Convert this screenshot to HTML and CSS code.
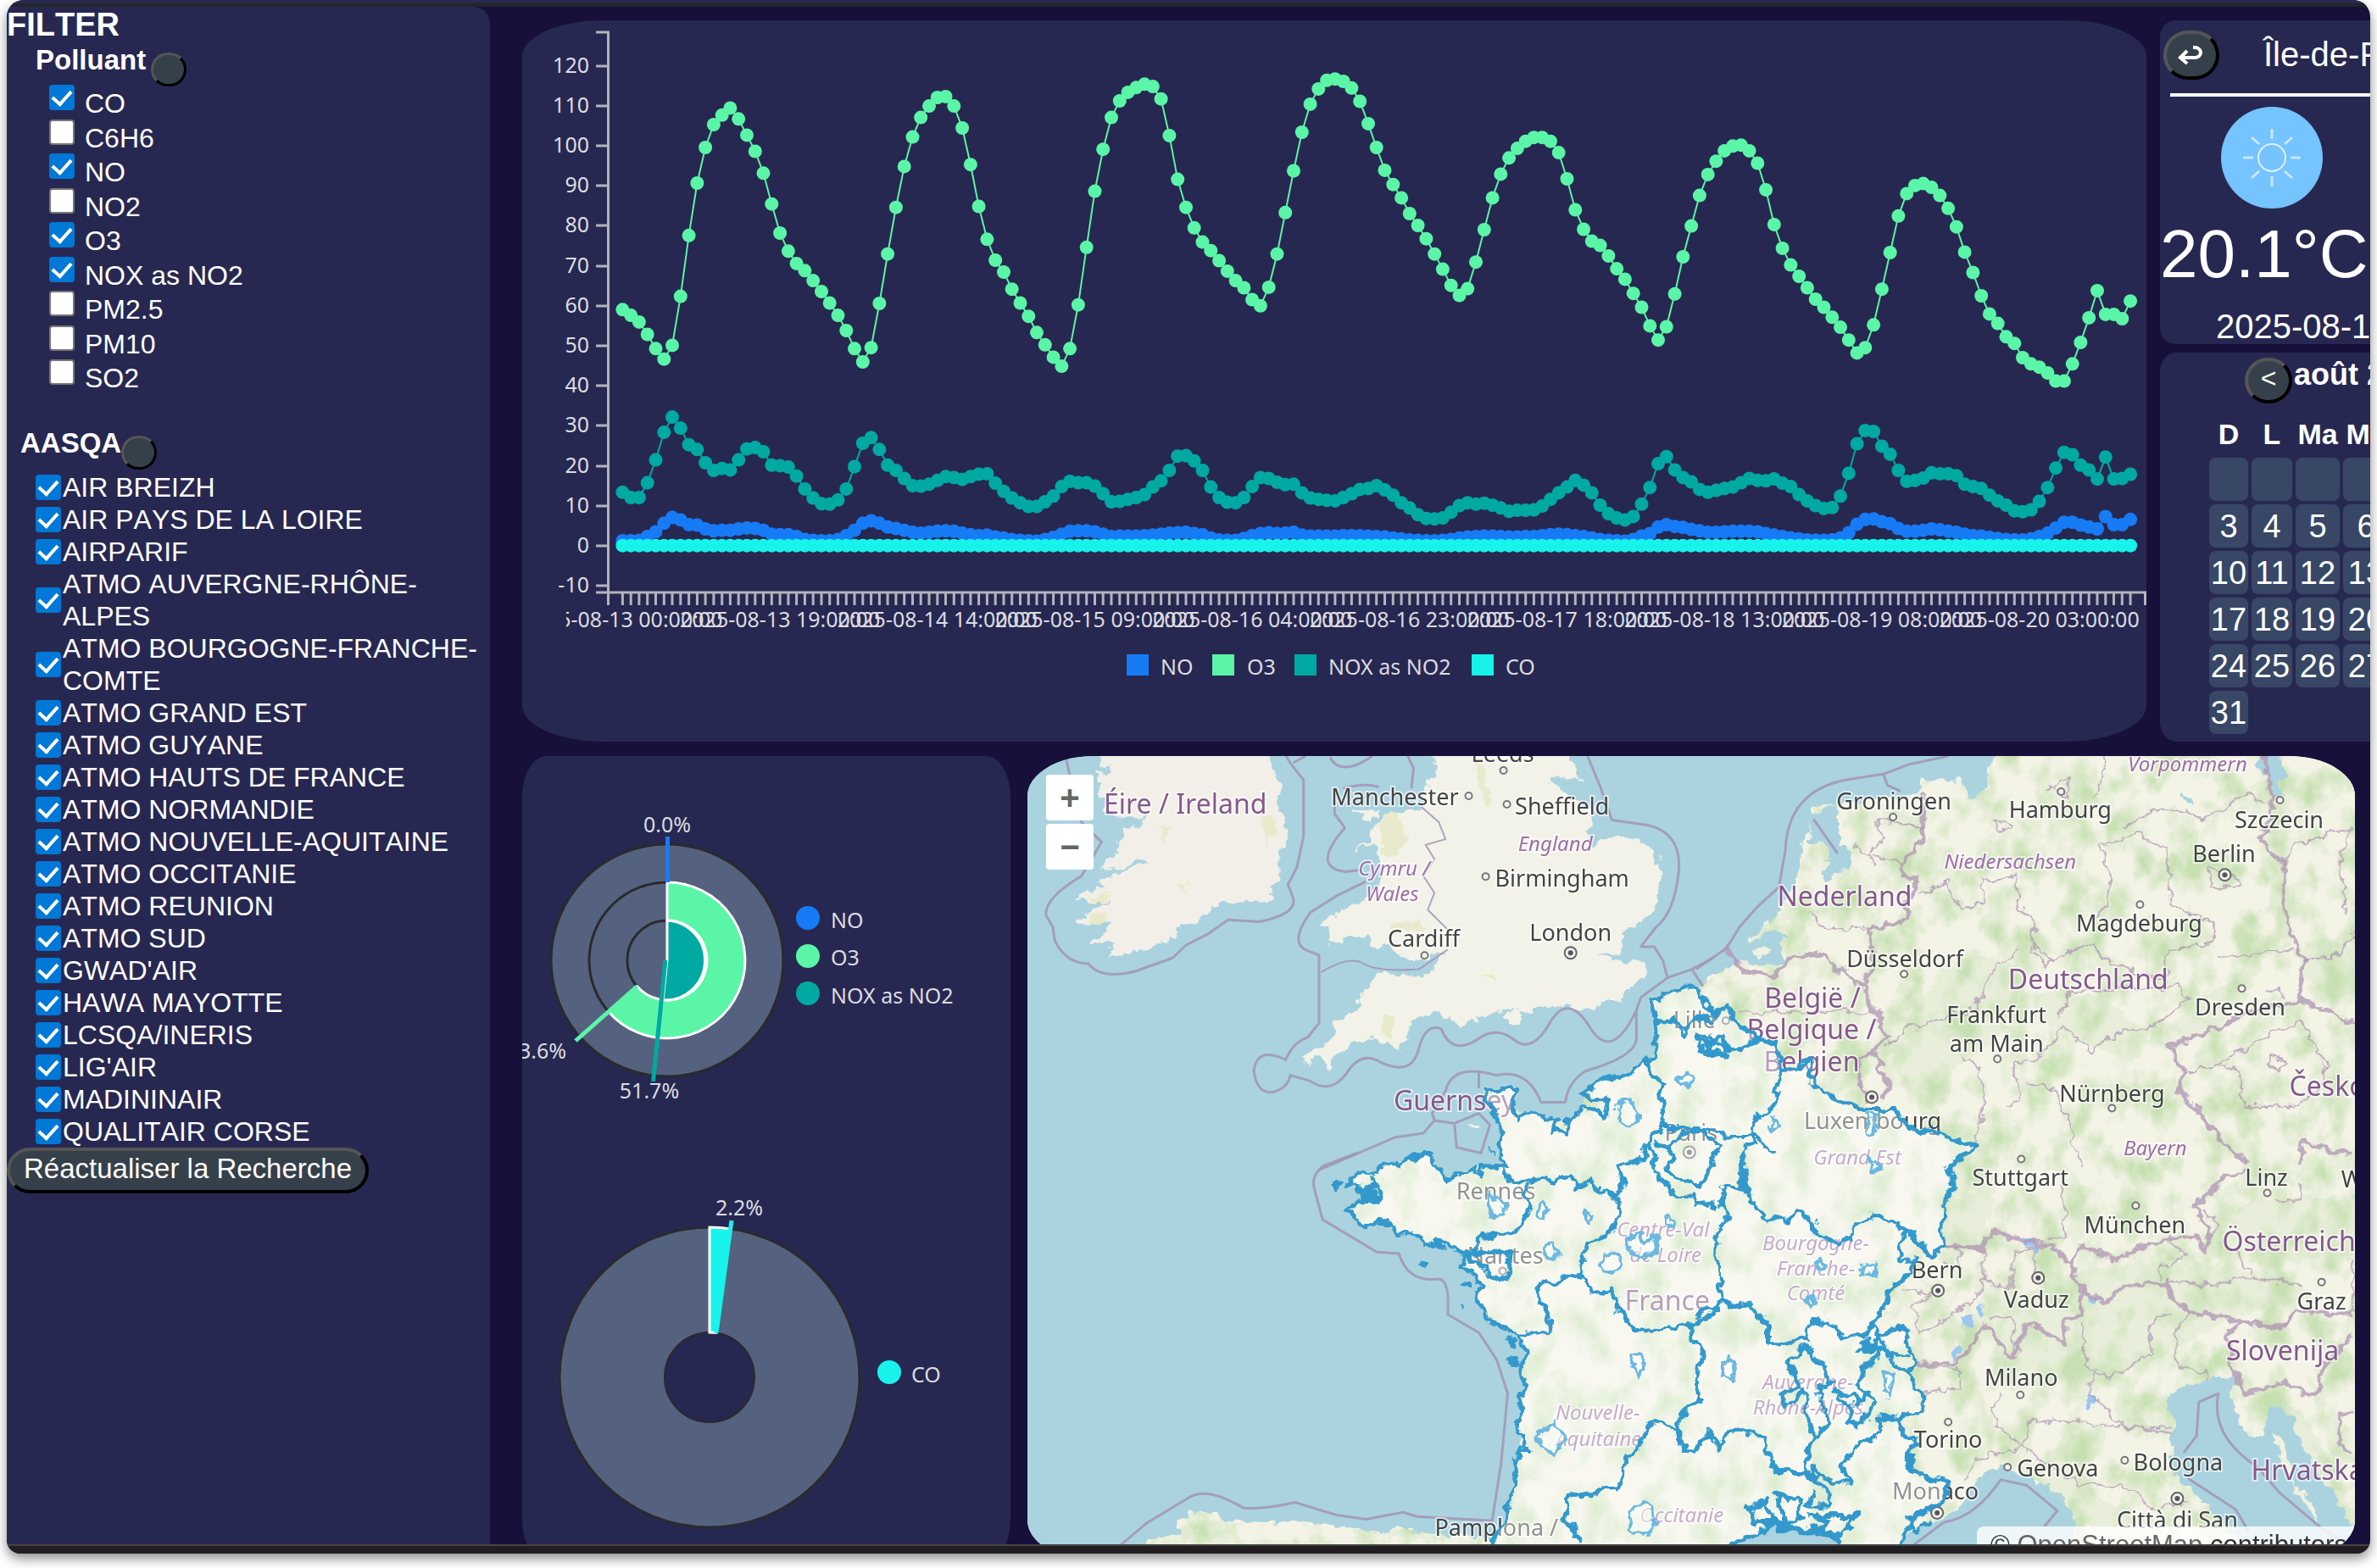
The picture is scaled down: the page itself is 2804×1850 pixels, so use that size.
FILE: index.html
```html
<!DOCTYPE html>
<html lang="fr">
<head>
<meta charset="utf-8">
<title>Qualité de l'air</title>
<link rel="stylesheet" href="styles.css">
</head>
<body>
<div class="window">
<div class="topbar"></div>
<div class="app">
<aside class="filter">
  <h1>FILTER</h1>
  <div class="group-head pollutant-head"><h2>Polluant</h2><button type="button" class="pill mini" aria-label="Tout cocher les polluants"></button></div>
  <div class="pollutants">
    <label><input type="checkbox" checked><span>CO</span></label>
    <label><input type="checkbox"><span>C6H6</span></label>
    <label><input type="checkbox" checked><span>NO</span></label>
    <label><input type="checkbox"><span>NO2</span></label>
    <label><input type="checkbox" checked><span>O3</span></label>
    <label><input type="checkbox" checked><span>NOX as NO2</span></label>
    <label><input type="checkbox"><span>PM2.5</span></label>
    <label><input type="checkbox"><span>PM10</span></label>
    <label><input type="checkbox"><span>SO2</span></label>
  </div>
  <div class="group-head aasqa-head"><h2>AASQA</h2><button type="button" class="pill mini" aria-label="Tout cocher les AASQA"></button></div>
  <div class="aasqa">
    <label><input type="checkbox" checked><span>AIR BREIZH</span></label>
    <label><input type="checkbox" checked><span>AIR PAYS DE LA LOIRE</span></label>
    <label><input type="checkbox" checked><span>AIRPARIF</span></label>
    <label><input type="checkbox" checked><span>ATMO AUVERGNE-RHÔNE-ALPES</span></label>
    <label><input type="checkbox" checked><span>ATMO BOURGOGNE-FRANCHE-COMTE</span></label>
    <label><input type="checkbox" checked><span>ATMO GRAND EST</span></label>
    <label><input type="checkbox" checked><span>ATMO GUYANE</span></label>
    <label><input type="checkbox" checked><span>ATMO HAUTS DE FRANCE</span></label>
    <label><input type="checkbox" checked><span>ATMO NORMANDIE</span></label>
    <label><input type="checkbox" checked><span>ATMO NOUVELLE-AQUITAINE</span></label>
    <label><input type="checkbox" checked><span>ATMO OCCITANIE</span></label>
    <label><input type="checkbox" checked><span>ATMO REUNION</span></label>
    <label><input type="checkbox" checked><span>ATMO SUD</span></label>
    <label><input type="checkbox" checked><span>GWAD'AIR</span></label>
    <label><input type="checkbox" checked><span>HAWA MAYOTTE</span></label>
    <label><input type="checkbox" checked><span>LCSQA/INERIS</span></label>
    <label><input type="checkbox" checked><span>LIG'AIR</span></label>
    <label><input type="checkbox" checked><span>MADININAIR</span></label>
    <label><input type="checkbox" checked><span>QUALITAIR CORSE</span></label>
  </div>
  <button type="button" class="pill refresh">Réactualiser la Recherche</button>
</aside>
<main class="content">
  <div class="row top">
    <section class="card line-card">
      <svg class="line-chart" viewBox="616 24 1916 851" role="img" aria-label="Concentrations par heure">
        <defs><clipPath id="plot"><rect x="668" y="24" width="1864" height="851"/></clipPath></defs>
        <g id="axes" class="axis"></g>
        <g id="ylabels" class="label end"></g>
        <g id="xlabels" class="label mid" clip-path="url(#plot)"></g>
        <g id="series"></g>
        <g class="label">
          <rect class="no" x="1329" y="772" width="26" height="25"/><text x="1369" y="796">NO</text>
          <rect class="o3" x="1430" y="772" width="26" height="25"/><text x="1471" y="796">O3</text>
          <rect class="nox" x="1527" y="772" width="26" height="25"/><text x="1567" y="796">NOX as NO2</text>
          <rect class="co" x="1736" y="772" width="26" height="25"/><text x="1776" y="796">CO</text>
        </g>
      </svg>
    </section>
    <div class="side">
      <section class="card weather">
        <header><button type="button" class="pill back" aria-label="Retour"><svg viewBox="0 0 32 26" class="back-icon"><path d="M3 16H20a7 6 0 0 0 0-12H18M11 8L3 16L11 23"/></svg></button><h2>Île-de-France</h2></header>
        <svg class="sun" viewBox="0 0 120 120"><circle cx="60" cy="60" r="60" fill="#75c3ff"/><circle cx="60" cy="60" r="16" fill="none" stroke="#dff0ff" stroke-width="2"/><path stroke="#dff0ff" stroke-width="3" opacity=".8" d="M60 26v12M60 82v12M26 60h12M82 60h12M36 36l9 8M84 36l-9 8M36 84l9-8M84 84l-9-8"/></svg>
        <p class="temp">20.1°C</p>
        <p class="date">2025-08-13</p>
      </section>
      <section class="card calendar">
        <header><button type="button" class="pill prev" aria-label="Mois précédent">&lt;</button><h3>août 2025</h3></header>
        <table>
          <thead><tr><th>D</th><th>L</th><th>Ma</th><th>Me</th></tr></thead>
          <tbody>
            <tr><td></td><td></td><td></td><td></td></tr>
            <tr><td>3</td><td>4</td><td>5</td><td>6</td></tr>
            <tr><td>10</td><td>11</td><td>12</td><td>13</td></tr>
            <tr><td>17</td><td>18</td><td>19</td><td>20</td></tr>
            <tr><td>24</td><td>25</td><td>26</td><td>27</td></tr>
            <tr><td>31</td></tr>
          </tbody>
        </table>
      </section>
    </div>
  </div>
  <div class="row bottom">
    <section class="card pies">
      <svg class="pie-chart" viewBox="616 891 576 949" role="img" aria-label="Répartition des polluants">
        <g class="ring"><circle cx="787" cy="1132" r="137"/><circle cx="787" cy="1132" r="92"/><circle cx="787" cy="1132" r="47"/></g>
        <path class="o3 edge" d="M787 1040A92 92 0 1 1 717.600 1192.400L751.500 1162.800A47 47 0 1 0 787 1085Z"/>
        <path class="nox edge" d="M787 1132V1085A47 47 0 0 1 782 1179Z"/>
        <g stroke-width="5"><path d="M787.500 986V1040" stroke="#177bf6"/><path d="M751.500 1162.800L679 1227" stroke="#5bf5a7"/><path d="M785 1132L770.500 1275" stroke="#00a9a2"/></g>
        <g class="ring"><circle cx="837" cy="1624" r="177"/></g><circle cx="837" cy="1624" r="53" fill="#272851" stroke="#292a2e" stroke-width="2"/>
        <path class="co edge" d="M837 1447A177 177 0 0 1 862 1449L844.500 1571.500L837 1571Z"/>
        <path d="M845 1572L863 1439" stroke="#17f3ea" stroke-width="5"/>
        <g class="label mid"><text x="787" y="981">0.0%</text><text x="766" y="1295">51.7%</text><text x="872" y="1433">2.2%</text></g>
        <g class="label end"><text x="668" y="1248">63.6%</text></g>
        <circle class="no" cx="953" cy="1082" r="14"/><circle class="o3" cx="953" cy="1127" r="14"/><circle class="nox" cx="953" cy="1171" r="14"/><circle class="co" cx="1049" cy="1618" r="14"/>
        <g class="label"><text x="980" y="1094">NO</text><text x="980" y="1138">O3</text><text x="980" y="1183">NOX as NO2</text><text x="1075" y="1630">CO</text></g>
      </svg>
    </section>
    <section class="map">
      <svg class="map-canvas" viewBox="1212 892 1566 948" preserveAspectRatio="xMinYMin slice" role="img" aria-label="Carte">
        <defs>
          <filter id="rough" filterUnits="userSpaceOnUse" x="1200" y="880" width="1600" height="970" color-interpolation-filters="sRGB">
            <feTurbulence type="fractalNoise" baseFrequency=".07" numOctaves="3" seed="4"/>
            <feDisplacementMap in="SourceGraphic" scale="16" xChannelSelector="R" yChannelSelector="G"/>
          </filter>
          <filter id="relief" filterUnits="userSpaceOnUse" x="1200" y="880" width="1600" height="970" color-interpolation-filters="sRGB">
            <feTurbulence type="fractalNoise" baseFrequency=".03 .022" numOctaves="5" seed="11"/>
            <feColorMatrix values="0 0 0 0 .78  0 0 0 0 .88  0 0 0 0 .70  2.800 0 0 0 -1.200"/>
            <feComposite in2="SourceGraphic" operator="in"/>
          </filter>
          <path id="mainland" d="M2349 892L2344 917L2346 930L2333 935L2328 943L2320 940L2313 920L2267 922L2264 937L2140 950L2136 970L2126 993L2120 1027L2115 1047L2095 1077L2085 1087L2077 1097L2056 1120L2051 1133L2003 1163L1974 1165L1951 1182L1951 1243L1940 1253L1922 1267L1885 1275L1867 1290L1867 1310L1849 1322L1817 1315L1796 1313L1783 1307L1788 1285L1749 1285L1757 1310L1768 1323L1770 1363L1780 1377L1749 1375L1728 1380L1707 1390L1689 1367L1681 1358L1660 1367L1634 1377L1590 1387L1587 1397L1613 1410L1587 1427L1613 1448L1634 1440L1671 1457L1681 1470L1702 1463L1728 1480L1723 1493L1739 1503L1747 1517L1739 1527L1757 1557L1791 1575L1801 1598L1791 1623L1801 1633L1794 1643L1791 1693L1786 1743L1775 1797L1760 1817L1723 1807L1692 1810L1655 1802L1629 1808L1577 1800L1527 1792L1493 1797L1446 1795L1430 1785L1409 1782L1388 1793L1391 1807L1352 1817L1335 1850L2030 1850L2044 1822L2067 1810L2092 1797L2123 1803L2164 1810L2169 1850L2228 1850L2241 1822L2251 1810L2287 1790L2313 1775L2328 1747L2359 1728L2379 1735L2410 1750L2433 1763L2446 1790L2450 1850L2800 1850V870H2349Z"/>
          <g id="town"><circle r="4" fill="#f4f2ee" stroke="#777" stroke-width="2"/></g>
          <g id="capital"><circle r="7" fill="#eee" stroke="#666" stroke-width="2"/><circle r="3" fill="#555"/></g>
        </defs>
        <rect x="1200" y="880" width="1600" height="970" fill="#aad3df"/>
        <g filter="url(#rough)" fill="#f2efe9">
          <use href="#mainland" fill="#f3f3e6"/>
          <g transform="translate(1200 880) scale(.523 .3333)">
            <path d="M165 10L190 70L210 65L215 85L185 95L190 130L185 165L200 200L190 230L220 250L290 250L270 290L240 290L235 330L225 370L190 440L240 430L270 400L300 410L200 460L185 490L200 510L150 520L125 550L210 545L130 620L150 640L210 630L165 700L220 690L200 745L250 740L300 710L355 680L365 640L400 630L435 585L440 560L500 550L575 545L570 500L590 470L585 420L605 350L605 280L580 200L598 150L570 60V10Z"/>
            <path fill="#f3f2e8" d="M930 10L940 80L930 120L925 160L905 190L920 225L845 235L820 260L800 300L790 335L755 375L800 345L815 360L820 470L790 540L740 580L700 605L685 630L700 650L700 690L730 705L745 675L790 670L805 715L835 710L870 755L900 765L930 750L965 720L940 770L935 810L810 812L800 860L775 870L765 935L720 980L700 1050L640 1100L650 1130L680 1100L700 1145L715 1100L750 1050L790 1040L830 1050L860 1080L880 1030L885 975L910 955L950 948L985 965L1000 1000L1005 970L1045 980L1030 960L1110 935L1140 945L1180 925L1240 920L1290 940L1320 910L1365 895L1370 860L1410 825L1418 770L1360 765L1310 735L1360 735L1365 660L1395 640L1400 615L1430 590L1452 450L1445 400L1420 350L1390 328L1320 325L1290 365L1280 330L1300 290L1300 240L1250 195L1200 115L1260 115L1275 135L1245 40V10ZM755 225H815L800 275ZM1095 960L1125 935L1143 960L1125 985ZM1015 1340h25v15h-25Z"/>
          </g>
          <g fill="#aad3df">
            <path d="M2138 960L2167 948L2169 997L2180 1002V1020L2154 1043L2149 1027L2159 1010L2149 993L2131 992ZM2087 1093L2110 1107L2097 1110L2105 1133L2082 1138L2051 1133L2056 1117L2077 1107Z"/>
          </g>
          <g fill="#e9eacb"><path d="M1628 965l18-8 12 30-10 25-18-4ZM1740 895l10 10 8 40-10 5ZM1488 970l12-10 6 20-12 15ZM1282 1058l28-5-10 14ZM1288 1080l20-8-5 18-20 5ZM1645 1086h30l8 10h-40ZM1632 1195l12 5-5 26-10-6ZM1365 975l12 5-4 14ZM1390 1045l10-4 2 14ZM1745 1150l16-6 4 10Z"/></g>
        </g>
        <g filter="url(#relief)"><use href="#mainland"/></g>
        <g fill="#c8e2b6" opacity=".25" filter="url(#rough)">
          <path d="M2290 1140q80-30 90 20t-60 90t-90-10ZM2240 1250q60-10 60 30t-50 20ZM2400 1170q100 0 120 50t-60 10t-70-20ZM2560 1210q50-60 100-50l-20 30-70 40ZM2700 1120q40-20 80 0v60l-60-20ZM2300 1350q40-40 50 30t-60 120ZM2360 1540q90-60 220-50t150 40l-90 20-110 60-80 20-110 10ZM2620 1430q80-30 160-10v60l-120 10ZM2390 1730q40-20 70 20t100 40l-20 40-70-20ZM2650 1650l60 10 60 100-50-10Z"/>
        </g>
        <g filter="url(#rough)"><path fill="#aad3df" d="M2556 1663L2554 1650L2564 1637L2595 1630L2610 1622L2638 1623L2641 1633L2628 1643L2633 1660L2651 1697L2667 1693L2677 1657L2702 1670L2713 1700L2733 1737L2769 1790L2790 1850L2660 1850L2615 1790L2590 1763L2564 1737L2559 1700L2569 1680ZM2138 960L2167 948L2169 997L2180 1002V1020L2154 1043L2149 1027L2159 1010L2149 993L2131 992ZM2656 905l30-20 10 30-12 8 8 20-12-5-6-22ZM2570 935l12 4 4 14-8-4ZM2087 1093L2110 1107L2097 1110L2105 1133L2082 1138L2051 1133L2056 1117L2077 1107Z"/><path fill="#f0f2df" d="M2680 1690l14 10 12 50-8-5ZM2700 1740l30 40 5 20-20-30ZM2064 1122l16-6 6 10-12 4Z"/>
        <path fill="#9cc8f0" d="M2312 1552l12-4 2 14-12 5ZM2332 1540l6-2 2 15-6 2ZM2305 1588l6-2-2 15-6 2ZM2462 1642l8 2-2 20-6-4ZM2385 1458l20 12-2 6-14-6ZM2466 1528l8 2-2 8-6-2Z"/></g>
        <!-- maritime limits and state borders -->
        <g fill="none" stroke="#a294b5" stroke-opacity=".85" stroke-width="3" stroke-linejoin="round">
          <g transform="translate(1200 880) scale(.523 .3333)">
            <path vector-effect="non-scaling-stroke" d="M110 45L118 100L145 270L190 340L145 460Q60 540 65 600L80 640L85 690Q110 770 160 770Q190 830 270 795L350 750L380 705L430 665L475 615L545 622Q630 595 622 540L610 490L630 430L645 320V120L622 75L605 36M622 60L650 36M705 40Q715 75 740 75T800 36M880 36L893 80L888 150M735 150Q780 130 815 145M715 190V240L738 290Q660 430 740 445L770 440M785 480L720 530L660 590Q610 700 655 725L680 740V980L655 1030Q620 1050 605 1110Q540 1060 533 1150Q540 1230 575 1225Q610 1210 615 1165L660 1185Q710 1240 750 1140Q780 1080 820 1120Q890 1170 905 1070Q920 980 955 1000Q980 1100 1040 1035Q1080 990 1120 1040T1200 980T1290 995T1395 935L1405 890L1465 820L1455 760L1435 710H1405L1440 640Q1480 590 1490 450T1420 280L1340 262L1315 150L1285 36M1395 935V1040Q1390 1100 1280 1150Q1240 1190 1235 1260H1180Q1150 1140 1080 1165Q980 1120 965 1220L935 1300L940 1325L985 1335L1040 1300L1065 1340L1045 1440L990 1420L985 1335M1040 1155V1210M940 1325L915 1370L850 1385L680 1500M1465 820L1520 790L1568 750M1520 790L1545 850"/>
            <path vector-effect="non-scaling-stroke" stroke-width="2" d="M685 800Q750 740 780 770T905 790L970 720M910 215L950 270L965 330L920 350L940 400L915 460L940 520L925 580L970 650"/>
          </g>
          <g transform="translate(1200 1360) scale(.523 .3333)">
            <path vector-effect="non-scaling-stroke" d="M765 0L690 45Q660 80 670 130L688 235L810 350L860 355Q880 460 950 445Q975 450 970 570L1040 635L1080 730L1105 850L1090 1100L1070 1300L900 1285L870 1270L785 1295L720 1280L625 1235Q560 1260 510 1255Q430 1180 390 1215L290 1310L230 1390"/>
          </g>
          <g transform="translate(2000 880) scale(.5128 .3333)">
            <path vector-effect="non-scaling-stroke" d="M0 790L70 715L100 640L140 570L190 500L205 370Q210 160 345 120L430 100L490 65L580 36M430 100L440 140L470 160M270 260L325 380"/>
          </g>
          <g transform="translate(2000 1360) scale(.5128 .3333)">
            <path vector-effect="non-scaling-stroke" d="M500 1385L570 1305Q640 1290 700 1155L760 1175L830 1265L800 1320M1120 1060L1150 1000L1155 880L1200 850Q1180 1000 1290 1110L1340 1200L1440 1330L1510 1400M1130 1150L1240 1260L1270 1340"/>
          </g>
        </g>
        <g fill="none" stroke="#b298b4" stroke-opacity=".8" stroke-linejoin="round" filter="url(#rough)">
          <g transform="translate(2000 880) scale(.5128 .3333)">
            <path vector-effect="non-scaling-stroke" stroke-width="5" d="M525 170L520 330L475 420V460L510 490L480 570V620L395 640L410 760L385 850L330 790L290 740L215 750L180 810L110 800L70 715M385 850L410 930L435 1030L410 1080L425 1150L450 1200L430 1260M410 1090L370 1110L375 1200L395 1260M1305 36L1325 220L1300 330L1350 420L1345 520L1360 640L1395 760L1385 900L1510 975M1385 900L1240 960L1180 1010L1085 1060L1120 1160L1110 1220L1200 1380L1265 1480M1385 1480L1395 1400L1510 1450"/>
            <path vector-effect="non-scaling-stroke" stroke-width="2" d="M940 36L930 130L910 190M810 150L855 110L850 180ZM680 255L720 280L700 310ZM1010 310L925 360L955 450L940 580L910 600M1010 310L1080 360L1090 560L1190 630V700L1080 720V840L940 750L910 700L820 760L770 690L780 640L740 560L735 460L650 480L665 560L610 580L575 480L510 530M980 290L1070 215L1170 260L1260 170L1310 200M820 760L800 780L770 700M690 770L730 750L740 710M690 770L640 930L500 990L440 1050M610 1100L650 1130L665 1260L640 1400M830 960L860 870L1110 850L1130 890L1050 1000L970 1010L910 1080L840 990L830 1030L780 1110L730 1120L740 1260L710 1290M760 1200L820 1210L850 1300L885 1480M1120 1160L1210 1120L1330 1010L1390 980L1450 1130L1430 1220L1380 1270H1260L1250 1170L1210 1120M1310 1120L1330 1095L1355 1130L1330 1150ZM1350 420L1380 350L1500 290L1480 400L1495 590M1390 760L1480 740L1510 650M1200 750L1370 720M100 940H400M410 420L400 380L430 330L415 260L525 290M360 360L475 420M265 580L285 640L390 650M1180 430L1250 470V495H1180ZM1310 870Q1350 850 1345 900"/>
          </g>
          <g transform="translate(2000 1360) scale(.5128 .3333)">
            <path vector-effect="non-scaling-stroke" stroke-width="5" d="M1270 60L1220 80L1145 190L1180 280L1170 350L1145 300H1080L960 375L890 330L860 400L820 330L750 310L680 275L660 330L570 330M860 400L890 480L880 570L850 590V665L800 635L765 600L725 730L665 610L600 740L510 745M880 480L940 530L980 475L1080 455L1090 510L1130 560L1345 620L1380 565H1510M1250 600L1220 640L1235 770L1265 850L1350 810L1420 860L1440 760L1510 640M1510 910L1480 920V1040L1510 1060"/>
            <path vector-effect="non-scaling-stroke" stroke-width="2" d="M570 330L660 340L665 440L640 520L520 630L490 540L540 500L480 480M660 450L720 480L730 350L780 340L770 400L800 460M1080 455L1200 465L1280 440L1390 470M1070 440V400L1130 360L1080 300M885 600L900 760L950 800L1050 700L1040 600L1090 560M1130 560L1100 650L1110 760L1170 770L1175 800M920 760L905 850L990 975L1100 970M700 850L675 900L690 960L750 1040L770 940L880 950L1100 990M750 1040L640 1080L620 1160M750 1040L880 1170L980 1170L1050 1260L1130 1230M510 750L600 760L605 830L520 850M840 110L850 300L810 305M1330 170L1390 160V100M1165 200L1200 240L1180 290M1380 565L1345 620M1240 350L1280 430M1510 370V565M600 340L610 400L570 390M680 580H730V700"/>
          </g>
        </g>
        <!-- place names -->
        <g class="land-name" text-anchor="middle">
          <text x="1398" y="960">Éire / Ireland</text><text x="1715" y="1310">Guernsey</text><text x="2175" y="1069">Nederland</text><text x="2462" y="1167">Deutschland</text><text x="2137" y="1189">België /</text><text x="2136" y="1226">Belgique /</text><text x="2136" y="1264">Belgien</text><text x="1966" y="1545">France</text><text x="2691" y="1604">Slovenija</text>
          <g text-anchor="start"><text x="2699" y="1293">Česko</text><text x="2620" y="1475">Österreich</text><text x="2654" y="1745">Hrvatska</text></g>
        </g>
        <g class="region-name" text-anchor="middle">
          <text x="1834" y="1004">England</text><text x="1644" y="1033">Cymru /</text><text x="1642" y="1063">Wales</text><text x="2579" y="910">Vorpommern</text><text x="2370" y="1025">Niedersachsen</text><text x="2190" y="1374">Grand Est</text><text x="2541" y="1363">Bayern</text><text x="1961" y="1458">Centre-Val</text><text x="1964" y="1488">de Loire</text><text x="1884" y="1674">Nouvelle-</text><text x="1885" y="1705">Aquitaine</text><text x="1983" y="1795">Occitanie</text><text x="2141" y="1474">Bourgogne-</text><text x="2141" y="1504">Franche-</text><text x="2141" y="1533">Comté</text><text x="2132" y="1638">Auvergne-</text><text x="2132" y="1668">Rhône-Alpes</text>
        </g>
        <g class="city-name" text-anchor="middle">
          <text x="1772" y="899">Leeds</text><text x="1645" y="950">Manchester</text><text x="1842" y="961">Sheffield</text><text x="1842" y="1046">Birmingham</text><text x="1679" y="1117">Cardiff</text><text x="1852" y="1110">London</text><text x="1998" y="1213">Lille</text><text x="1994" y="1346">Paris</text><text x="2233" y="955">Groningen</text><text x="2429" y="965">Hamburg</text><text x="2687" y="977">Szczecin</text><text x="2622" y="1017">Berlin</text><text x="2522" y="1099">Magdeburg</text><text x="2246" y="1141">Düsseldorf</text><text x="2354" y="1207">Frankfurt</text><text x="2354" y="1241">am Main</text><text x="2641" y="1198">Dresden</text><text x="2490" y="1300">Nürnberg</text><text x="2208" y="1332">Luxembourg</text><text x="1764" y="1414">Rennes</text><text x="1775" y="1490">Nantes</text><text x="2382" y="1398">Stuttgart</text><text x="2672" y="1398">Linz</text><text x="2517" y="1454">München</text><text x="2284" y="1507">Bern</text><text x="2401" y="1542">Vaduz</text><text x="2737" y="1544">Graz</text><text x="2383" y="1634">Milano</text><text x="2297" y="1707">Torino</text><text x="2426" y="1741">Genova</text><text x="2568" y="1734">Bologna</text><text x="2282" y="1768">Monaco</text><text x="2567" y="1802">Città di San</text>
          <g text-anchor="start"><text x="1692" y="1811">Pamplona /</text><text x="2760" y="1400">Wien</text></g>
        </g>
        <g><use href="#town" x="1773" y="909"/><use href="#town" x="1732" y="939"/><use href="#town" x="1777" y="949"/><use href="#town" x="1752" y="1034"/><use href="#town" x="1680" y="1127"/><use href="#town" x="2232" y="964"/><use href="#town" x="2430" y="934"/><use href="#town" x="2688" y="944"/><use href="#town" x="2523" y="1067"/><use href="#town" x="2245" y="1149"/><use href="#town" x="2355" y="1249"/><use href="#town" x="2643" y="1166"/><use href="#town" x="2490" y="1307"/><use href="#town" x="2383" y="1367"/><use href="#town" x="2518" y="1422"/><use href="#town" x="2673" y="1407"/><use href="#town" x="2737" y="1512"/><use href="#town" x="2382" y="1645"/><use href="#town" x="2297" y="1677"/><use href="#town" x="2367" y="1730"/><use href="#town" x="2505" y="1722"/><use href="#town" x="1772" y="1499"/><use href="#town" x="2035" y="1204"/>
        <use href="#capital" x="1852" y="1124"/><use href="#capital" x="2623" y="1032"/><use href="#capital" x="2207" y="1294"/><use href="#capital" x="2285" y="1522"/><use href="#capital" x="2403" y="1507"/><use href="#capital" x="2567" y="1767"/><use href="#capital" x="2284" y="1784"/><use href="#capital" x="1992" y="1359"/></g>
        <!-- French regions overlay -->
        <g filter="url(#rough)" stroke="#3399cc" stroke-width="5" fill="none" stroke-linejoin="round">
          <path fill="#fff" fill-opacity=".42" d="M2003 1163L1974 1165L1951 1182L1951 1243L1940 1253L1922 1267L1885 1275L1867 1290L1895 1300L1895 1314L1867 1308L1849 1322L1845 1335H1832L1840 1320L1817 1315L1796 1313L1790 1319L1783 1307L1788 1285L1749 1285L1757 1310L1768 1323L1770 1363L1780 1377L1749 1375L1746 1390L1740 1376L1728 1382L1707 1390L1689 1367L1681 1358L1672 1368L1660 1362L1650 1375L1634 1372L1620 1382L1590 1387L1587 1397L1620 1400L1600 1406L1625 1415L1603 1417L1587 1427L1613 1448L1634 1440L1650 1452L1671 1457L1681 1470L1702 1463L1728 1480L1723 1493L1739 1503L1747 1517L1739 1527L1757 1557L1791 1575L1801 1598L1791 1623L1801 1633L1794 1643L1791 1693L1803 1710L1790 1708L1786 1743L1775 1797L1760 1817L1785 1850L2030 1850L2044 1822L2067 1810L2092 1797L2123 1803L2164 1810L2169 1830L2238 1830L2249 1807L2256 1790L2282 1777L2295 1767L2297 1748L2256 1737L2251 1720L2259 1697L2244 1690L2238 1672L2264 1663L2269 1647L2249 1620L2259 1607L2251 1587L2246 1565L2215 1573L2208 1560L2223 1540L2228 1523L2251 1503L2259 1487L2238 1488V1465L2250 1452L2277 1480L2290 1470L2292 1420L2303 1400L2297 1377L2323 1360L2328 1350L2295 1342L2282 1333L2251 1330L2231 1307H2205L2169 1300L2137 1277L2136 1245L2123 1262L2100 1263L2095 1230L2072 1228L2067 1217L2049 1210L2036 1188L2023 1197L2010 1187Z"/>
          <g transform="translate(1200 880) scale(.523 .3333)">
            <path vector-effect="non-scaling-stroke" d="M1415 1120L1450 1190L1455 1300L1450 1350L1520 1350L1600 1380L1670 1380L1700 1440M1450 1350L1425 1400L1435 1500M1435 980L1480 965L1500 1020L1520 960L1560 960M1530 1020L1550 1090L1600 1085L1590 1030Z"/>
            <path vector-effect="non-scaling-stroke" d="M1445 1400L1470 1430L1490 1380L1540 1360L1580 1420L1560 1500L1540 1560L1500 1540L1460 1500L1480 1450Z"/>
          </g>
          <g transform="translate(2000 880) scale(.5128 .3333)">
            <path vector-effect="non-scaling-stroke" d="M195 1150L180 1250L170 1300L130 1310V1400L105 1440V1500M0 960L40 980M0 1030L60 1060L100 1075L140 1045M10 1080L40 1040L30 1090Z"/>
          </g>
          <g transform="translate(1200 1360) scale(.523 .3333)">
            <path vector-effect="non-scaling-stroke" d="M1435 60L1480 145L1525 150L1530 180L1580 185M1420 -40L1410 20L1355 45L1365 100L1350 160L1310 140L1300 100L1265 120L1240 80L1200 100L1110 95L1095 60M1145 90L1150 210L1125 275L1040 300L1030 350M1350 160L1355 230L1330 290L1285 320L1270 430L1200 460L1165 475L1195 570L1200 640H1130M1270 430L1300 490L1335 475L1360 560L1395 630L1510 610L1550 590L1580 540M1510 610L1545 700L1530 760L1535 870L1505 910L1490 970L1430 950L1400 1040L1370 1080L1360 1170L1310 1195L1240 1220L1235 1300L1260 1330V1385M1490 970L1500 1050H1530L1555 990L1580 1010M1010 360L1105 350L1110 430L1085 445L1040 400ZM800 80L820 160L780 150"/>
          </g>
          <g transform="translate(2000 1360) scale(.5128 .3333)">
            <path vector-effect="non-scaling-stroke" d="M105 0L110 120H60V180L75 220L45 290V370L65 525L20 550L0 590M65 525L90 550L125 530L145 590L165 600V670L205 675L250 650L270 590L300 595L340 650L385 655L405 600M110 120L160 235L210 235L240 210L270 235L280 290L320 320L355 300L360 265L400 215L450 240L500 290L530 360M0 1040L25 980L40 990L55 1045L70 990L100 975L155 1010L180 1130H245M465 935L415 940L430 990L370 1025L355 1070L330 1100L355 1170L290 1150L245 1130M255 670L215 745L240 830L195 850L205 895L250 840L265 1010L245 1130L300 1190L310 1250L255 1245L270 1190M255 670L270 730L295 750L300 810L320 820L280 830L290 900L305 950L270 1010M400 650L380 700L430 690L400 740L375 780L380 830L410 880L380 960H345L360 900L320 850H360L370 890L400 840M430 650L440 700L490 720M440 700L460 760L490 780M430 640L400 700M120 1250L160 1230L180 1310L140 1310ZM185 1210L235 1225L240 1290L210 1310ZM260 1280H370L340 1350L280 1340L300 1300ZM270 1110L290 1130L270 1160ZM550 1250L490 1290L500 1340L540 1300"/>
            <path vector-effect="non-scaling-stroke" stroke-width="8" d="M390 680L410 690M180 1320L240 1335L320 1350M270 1330L300 1320"/>
          </g>
          <path stroke-width="8" d="M1600 1400L1618 1408L1606 1418M1664 1365L1690 1362M1692 1464L1704 1470M1676 1488L1684 1492M1724 1514L1734 1518M1722 1540h4M1776 1580L1788 1586M1784 1600L1792 1612M1570 1393L1580 1400M1756 1357h2"/>
        </g>
        <g filter="url(#rough)" stroke="#6db8e0" stroke-width="4" fill="#fff" fill-opacity=".5" stroke-linejoin="round">
          <path d="M1988 1262l8 10-4 10-12-6ZM1908 1300l14-2 10 14-8 14-14-4-4-12ZM1754 1408l8 6 12 4-2 14-8 6-10-16ZM1818 1418l8 8-4 10-10-4ZM1868 1428l8 4-2 10-6-6ZM1820 1470l12-6 6 14-8 8-12-2ZM1890 1480l12-4 10 14-10 12-14-8ZM1920 1462l14-8 6 8 16-4-2 18-14 6-16-2ZM1966 1434l8 6-2 8-8-2ZM1924 1598l8-4 8 16-6 12-8-10ZM1814 1688l20-8 12 18-12 18-20-12ZM1926 1778l16-6 12 22-12 16-20-8ZM2202 1312l12 4-4 24-8-4ZM2086 1322l10-4 2 12-10 2ZM2206 1364l12 12-10 6ZM2142 1488l8-2 2 8-6 4ZM2194 1492l18-4v14l-14 4ZM2132 1532l6-4 2 8-6 2ZM2032 1608l6-6 8 14-4 12-12-6ZM2222 1618l10 6-2 22-6-6Z"/>
        </g>
      </svg>
      <div class="zoom"><button type="button" aria-label="Zoom avant">+</button><button type="button" aria-label="Zoom arrière">−</button></div>
      <div class="credit">© <a href="#">OpenStreetMap</a> contributors.</div>
    </section>
  </div>
</main>
</div>
<div class="bottombar"></div>
</div>
<script src="chart.js"></script>
</body>
</html>
```
FILE: styles.css
```css
* { box-sizing: border-box; }
body { margin: 0; background: #fff; color: #fff; font-family: "Liberation Sans", Arial, sans-serif; font-size: 32px; }
h1, h2, h3, p { margin: 0; }
.window { margin: 0 8px 17px; height: calc(100vh - 17px); display: flex; flex-direction: column; overflow: hidden; border-radius: 20px 20px 16px 16px; background: #17103a; box-shadow: 0 6px 14px rgba(0, 0, 0, .45); }
.topbar { flex: none; height: 8px; background: #282850; border-bottom: 4px solid #222528; }
.bottombar { flex: none; height: 11px; background: #221d20; border-top: 2px solid #444; }
.app { flex: 1; min-height: 0; display: flex; gap: 38px; overflow: hidden; }

.filter { flex: none; width: 570px; background: #272851; border-top-right-radius: 20px; font-kerning: none; }
.filter h1 { font-size: 38px; line-height: 42px; }
.filter h2 { font-size: 33px; line-height: 38px; }
.group-head { display: flex; align-items: flex-start; }
.pollutant-head { padding-left: 34px; gap: 6px; height: 50px; padding-top: 2px; }
.pollutant-head .mini { margin-top: 10px; }
.aasqa-head { padding-left: 16px; height: 52px; margin-top: 39px; }
.aasqa-head .mini { margin-top: 10px; }
.pill { font-family: inherit; color: #fff; background: #36404a; border: 4px solid; border-color: #555 #000 #000 #555; border-radius: 40px; padding: 0; }
.mini { width: 42px; height: 40px; border-width: 3px; }
.pollutants { display: grid; grid-auto-rows: 1fr; height: 365px; padding-left: 50px; }
.pollutants label { display: flex; align-items: flex-start; gap: 12px; min-height: 0; }
.pollutants span { line-height: 36px; margin-top: 4px; }
.pollutants input { margin-top: 2px; }
.aasqa { padding-left: 34px; }
.aasqa label { display: flex; align-items: center; gap: 2px; line-height: 38px; }
input[type="checkbox"] { appearance: none; flex: none; width: 30px; height: 30px; margin: 0; border: 2px solid #767676; border-radius: 4px; background: #fff; display: grid; place-items: center; }
input[type="checkbox"]:checked { background: #0078d7; border-color: #0078d7; }
input[type="checkbox"]:checked::after { content: ""; width: 10px; height: 18px; margin-bottom: 5px; border: solid #fff; border-width: 0 4px 4px 0; transform: rotate(42deg); }
.refresh { height: 54px; padding: 0 16px 4px; font-size: 33px; line-height: 40px; }

.content { flex: 1; min-width: 0; display: flex; flex-direction: column; gap: 17px; padding-top: 16px; }
.row { flex: none; display: flex; }
.row.top { gap: 16px; }
.row.bottom { gap: 20px; padding-right: 18px; }
.card { background: #272851; border-radius: 5%; overflow: hidden; }
.line-card { flex: 1; min-width: 0; }
.line-chart, .pie-chart { display: block; width: 100%; }
.label { font-family: "Noto Sans", sans-serif; font-size: 25px; fill: #dcdce0; }
.mid { text-anchor: middle; }
.end { text-anchor: end; }
.axis { stroke: #b4b3bd; stroke-width: 3; fill: none; }
.no { fill: #177bf6; } .o3 { fill: #5bf5a7; } .nox { fill: #00a9a2; } .co { fill: #17f3ea; }
.line.no { stroke: #177bf6; } .line.o3 { stroke: #5bf5a7; } .line.nox { stroke: #00a9a2; } .line.co { stroke: #17f3ea; }
.line { fill: none; stroke-width: 2; }
.ring circle { fill: #54627f; stroke: #292a2e; stroke-width: 3; }
.edge { stroke: #fff; stroke-width: 3; }

.side { flex: none; width: 248px; display: flex; flex-direction: column; gap: 10px; }
.side .card { width: 380px; }
.weather { height: 382px; }
.weather header { display: flex; height: 90px; margin-left: 12px; border-bottom: 4px solid #fff; }
.back { width: 66px; height: 58px; margin: 12px 0 0 -8px; display: grid; place-items: center; flex: none; }
.back-icon { width: 32px; height: 26px; fill: none; stroke: #fff; stroke-width: 4; }
.weather h2 { font-size: 40px; font-weight: 400; line-height: 46px; margin: 17px 0 0 52px; white-space: nowrap; }
.sun { display: block; width: 120px; height: 120px; margin: 12px 0 0 72px; }
.temp { font-size: 80px; line-height: 92px; margin-top: 8px; }
.date { font-size: 40px; line-height: 46px; padding-left: 66px; margin-top: 16px; }
.calendar { flex: 1; }
.calendar header { display: flex; padding: 6px 0 0 100px; gap: 2px; }
.prev { width: 56px; height: 54px; font-size: 32px; line-height: 40px; padding-bottom: 6px; }
.calendar h3 { font-size: 36px; line-height: 40px; white-space: nowrap; }
.calendar table { border-spacing: 4px; margin: 10px 0 0 54px; table-layout: fixed; width: 220px; }
.calendar th { font-size: 34px; line-height: 40px; height: 46px; padding: 0 0 2px; }
.calendar th:first-child { width: 46px; }
.calendar th:nth-child(2) { width: 48px; }
.calendar th:nth-child(3) { width: 52px; }
.calendar td { height: 51px; padding: 0; background: #384766; border-radius: 8px; text-align: center; font-size: 38px; line-height: 44px; }

.pies { flex: none; width: 576px; }
.map { position: relative; flex: 1; min-width: 0; border-radius: 5%; overflow: hidden; background: #aad3df; }
.map-canvas { display: block; width: 100%; height: 100%; }
.map text { font-family: "Noto Sans", sans-serif; paint-order: stroke; stroke: #fff; stroke-opacity: .6; stroke-width: 4px; }
.city-name { font-size: 27px; fill: #444; }
.land-name { font-size: 32px; fill: #85598b; }
.region-name { font-size: 24px; font-style: italic; fill: #9d70a5; }
.zoom { position: absolute; left: 22px; top: 22px; display: grid; gap: 4px; }
.zoom button { width: 56px; height: 54px; padding: 0; border: 0; border-radius: 4px; background: #fff; color: #666; font: bold 40px/48px "Liberation Sans", Arial, sans-serif; }
.credit { position: absolute; right: 0; bottom: 0; height: 40px; width: 446px; padding-left: 16px; border-top-left-radius: 8px; background: rgba(255, 255, 255, .8); color: #333; font-size: 31px; line-height: 44px; overflow: hidden; white-space: nowrap; }
.credit a { color: #666; text-decoration: none; }
```
FILE: chart.js
```js
// Hourly samples; each number is a vertical position on the recorder grid,
// where 1147 is a concentration of zero.
const O3 = [651,663,677,703,733,755,726,623,495,385,310,262,242,227,250,284,318,364,429,490,528,554,569,590,613,637,663,695,733,761,731,638,534,436,350,288,247,223,205,203,223,269,346,434,503,547,572,608,637,665,699,725,751,770,733,641,520,402,314,247,212,194,184,177,182,208,285,377,436,479,509,527,548,570,590,605,630,643,604,534,447,359,278,219,187,169,166,171,185,213,260,310,358,388,416,449,474,502,534,566,600,621,607,551,483,416,366,332,312,297,289,289,297,321,376,441,482,507,516,538,565,587,617,646,685,715,687,618,540,475,411,367,339,317,307,305,317,343,399,472,522,557,581,605,629,646,667,688,715,742,731,683,608,531,454,407,390,386,394,411,438,477,530,573,622,660,680,708,722,752,765,772,784,801,801,765,720,668,611,661,661,670,633];
const NOX = [1035,1046,1046,1015,967,909,877,900,935,945,973,989,985,988,967,944,941,950,978,979,982,1001,1028,1047,1059,1060,1051,1028,981,932,920,945,978,989,1006,1021,1022,1018,1010,1002,1004,1008,1002,997,996,1016,1033,1047,1057,1065,1065,1055,1043,1023,1012,1015,1015,1022,1038,1055,1054,1050,1046,1040,1024,1011,989,959,958,969,989,1024,1046,1056,1057,1046,1023,1004,1006,1014,1019,1018,1036,1047,1050,1052,1053,1046,1038,1029,1027,1021,1030,1041,1057,1068,1082,1090,1091,1089,1077,1063,1057,1060,1058,1062,1068,1075,1073,1073,1072,1064,1050,1036,1024,1010,1020,1036,1062,1080,1089,1093,1086,1060,1025,975,960,988,1004,1013,1029,1035,1031,1027,1024,1015,1006,1010,1011,1007,1016,1023,1040,1053,1063,1069,1067,1043,995,933,905,907,938,955,989,1012,1010,1005,994,996,996,1000,1018,1023,1027,1041,1053,1062,1074,1076,1072,1054,1025,984,951,956,978,988,1007,961,1007,1006,997];
const NO = [1137,1137,1136,1128,1118,1100,1088,1093,1103,1104,1112,1116,1115,1115,1112,1110,1111,1115,1123,1124,1124,1128,1134,1136,1137,1137,1134,1126,1115,1100,1095,1100,1108,1111,1115,1119,1121,1119,1117,1116,1117,1121,1124,1126,1125,1129,1131,1134,1136,1137,1138,1134,1130,1123,1117,1116,1116,1118,1123,1128,1127,1127,1127,1126,1125,1123,1121,1120,1119,1122,1124,1131,1135,1136,1136,1132,1126,1122,1120,1122,1121,1119,1125,1127,1127,1127,1127,1126,1126,1126,1127,1128,1129,1131,1133,1135,1136,1137,1137,1136,1134,1131,1129,1128,1127,1127,1128,1129,1129,1128,1128,1126,1124,1123,1124,1126,1128,1131,1134,1136,1137,1138,1134,1127,1122,1108,1103,1107,1109,1113,1116,1119,1119,1118,1117,1117,1117,1118,1122,1125,1128,1131,1133,1135,1136,1136,1135,1131,1120,1102,1092,1091,1097,1101,1111,1117,1117,1115,1112,1114,1117,1119,1123,1126,1127,1130,1132,1134,1135,1135,1133,1128,1121,1110,1098,1098,1104,1108,1112,1086,1103,1103,1092];
const CO = O3.map(() => 1147);

const SVG = "http://www.w3.org/2000/svg";
const X0 = 734.4, STEP = 9.773, ROW = 1.782;
function add(parent, tag, attrs, text) {
  const el = document.createElementNS(SVG, tag);
  for (const k in attrs) el.setAttribute(k, attrs[k]);
  if (text) el.textContent = text;
  document.getElementById(parent).appendChild(el);
}
const xAt = i => +(X0 + STEP * i).toFixed(1);

function drawSeries(name, samples) {
  const pts = samples.map((s, i) => [xAt(i), +(s / ROW).toFixed(1)]);
  add("series", "polyline", { class: "line " + name, points: pts.join(" ") });
  pts.forEach(([cx, cy]) => add("series", "circle", { class: name, cx, cy, r: 8 }));
}
drawSeries("no", NO);
drawSeries("o3", O3);
drawSeries("nox", NOX);
drawSeries("co", CO);

let d = "M703 38H717.5V714M703 699H2530.500V714";
for (let i = 0; i < O3.length; i++) d += `M${xAt(i)} 699v15`;
for (let v = -10; v <= 120; v += 10) {
  const y = Math.round(644 - v * 4.719);
  d += `M703 ${y}h15`;
  add("ylabels", "text", { x: 695, y: y + 8 }, String(v));
}
add("axes", "path", { d });

["13 00", "13 19", "14 14", "15 09", "16 04", "16 23", "17 18", "18 13", "19 08", "20 03"].forEach((t, k) =>
  add("xlabels", "text", { x: xAt(k * 19), y: 740 }, `2025-08-${t}:00:00`));
```
